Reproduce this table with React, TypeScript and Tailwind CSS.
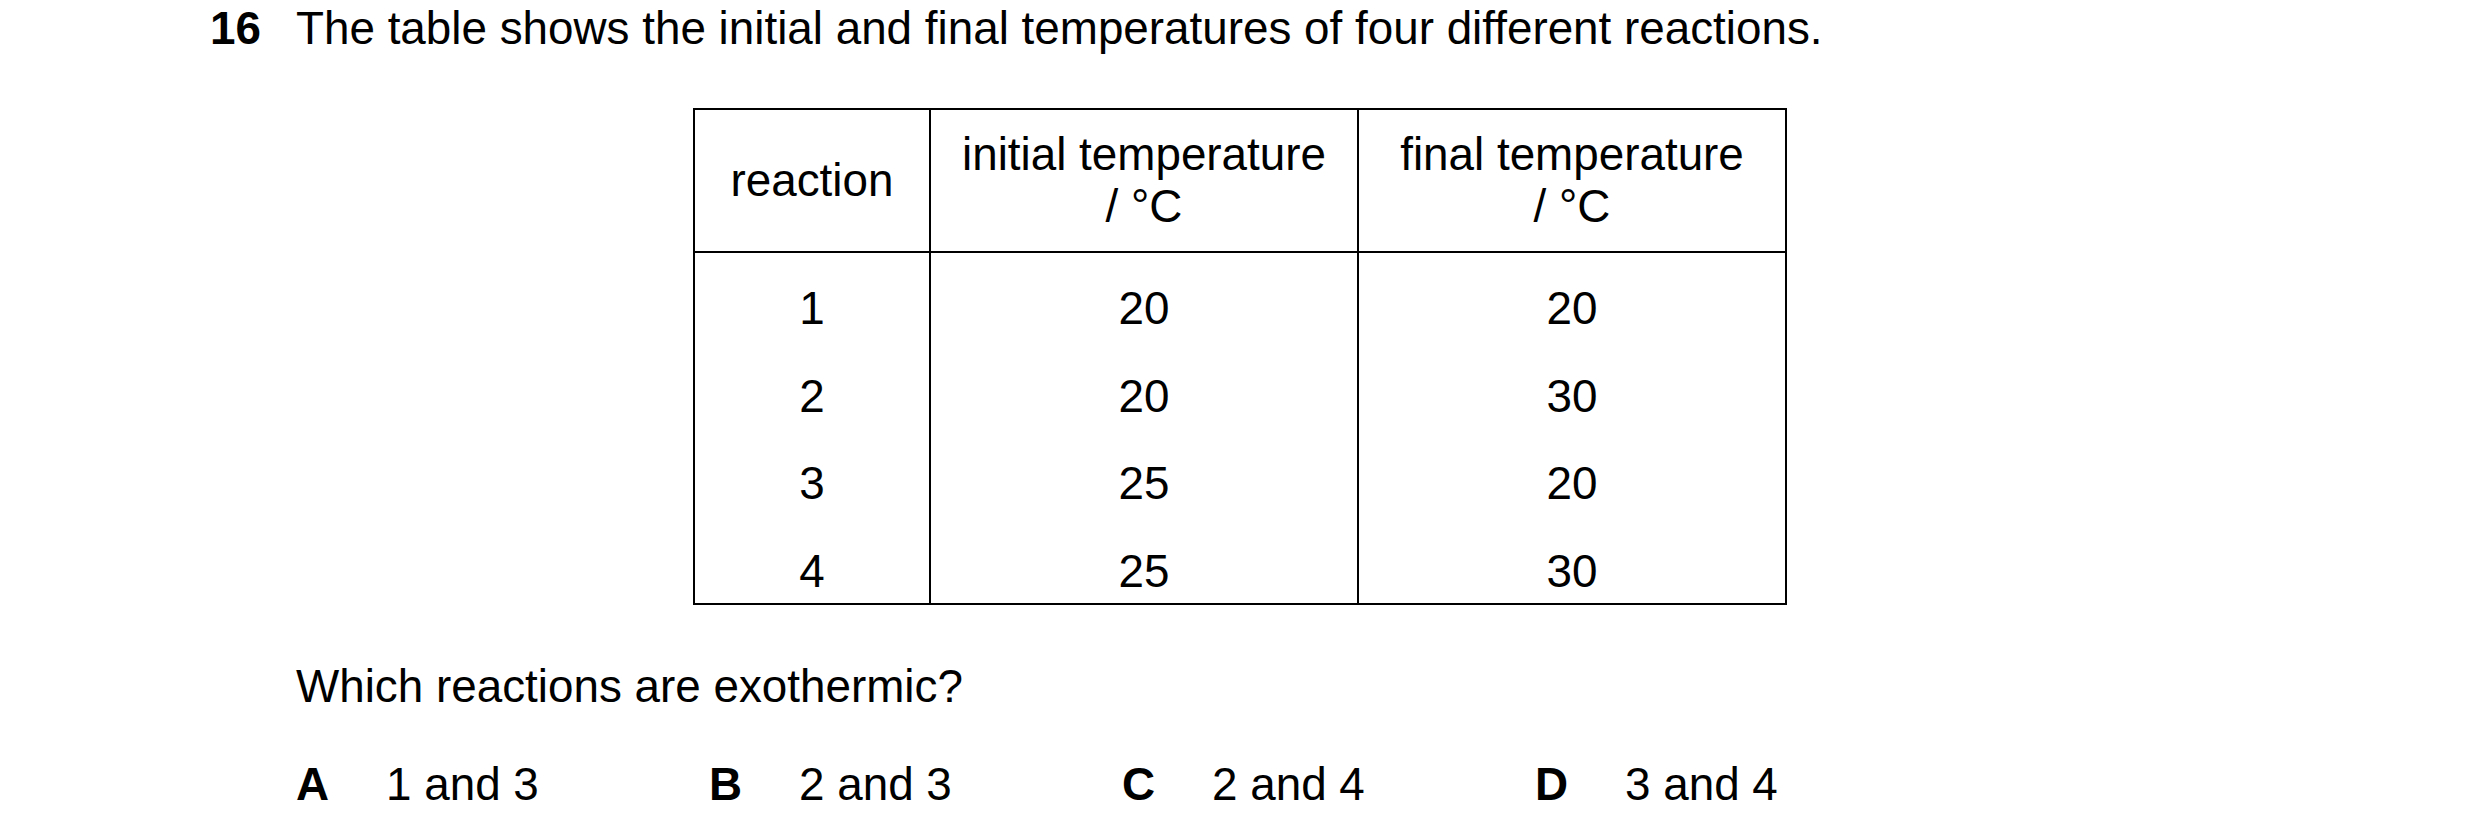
import React from 'react';

const rows = [
  { reaction: '1', initial: '20', final: '20' },
  { reaction: '2', initial: '20', final: '30' },
  { reaction: '3', initial: '25', final: '20' },
  { reaction: '4', initial: '25', final: '30' },
];

const options = [
  { letter: 'A', text: '1 and 3' },
  { letter: 'B', text: '2 and 3' },
  { letter: 'C', text: '2 and 4' },
  { letter: 'D', text: '3 and 4' },
];

export default function App() {
  return (
    <div className="w-[2480px] h-[840px] bg-white text-black font-['Liberation_Sans',Arial,sans-serif] text-[45.8px] leading-[52px]">
      {/* Question stem */}
      <div className="flex pt-[3px] pl-[210px]">
        <span className="w-[86px] font-bold">16</span>
        <span>The table shows the initial and final temperatures of four different reactions.</span>
      </div>

      {/* Table */}
      <div className="ml-[693px] mt-[53px] w-[1094px] border-2 border-black">
        <div className="grid grid-cols-[236px_428px_426px] border-b-2 border-black h-[143px]">
          <div className="flex items-center justify-center border-r-2 border-black">reaction</div>
          <div className="flex flex-col items-center justify-center border-r-2 border-black">
            <span>initial temperature</span>
            <span>/ °C</span>
          </div>
          <div className="flex flex-col items-center justify-center">
            <span>final temperature</span>
            <span>/ °C</span>
          </div>
        </div>
        <div className="grid grid-cols-[236px_428px_426px]">
          <div className="border-r-2 border-black">
            {rows.map((r) => (
              <div key={r.reaction} className="h-[87.5px] pt-[30px] text-center">{r.reaction}</div>
            ))}
          </div>
          <div className="border-r-2 border-black">
            {rows.map((r) => (
              <div key={r.reaction} className="h-[87.5px] pt-[30px] text-center">{r.initial}</div>
            ))}
          </div>
          <div>
            {rows.map((r) => (
              <div key={r.reaction} className="h-[87.5px] pt-[30px] text-center">{r.final}</div>
            ))}
          </div>
        </div>
      </div>

      {/* Question */}
      <div className="pl-[296px] mt-[55.5px]">Which reactions are exothermic?</div>

      {/* Options */}
      <div className="pl-[296px] mt-[46.5px] flex">
        {options.map((o) => (
          <div key={o.letter} className="flex w-[413px]">
            <span className="w-[90px] font-bold">{o.letter}</span>
            <span>{o.text}</span>
          </div>
        ))}
      </div>
    </div>
  );
}
